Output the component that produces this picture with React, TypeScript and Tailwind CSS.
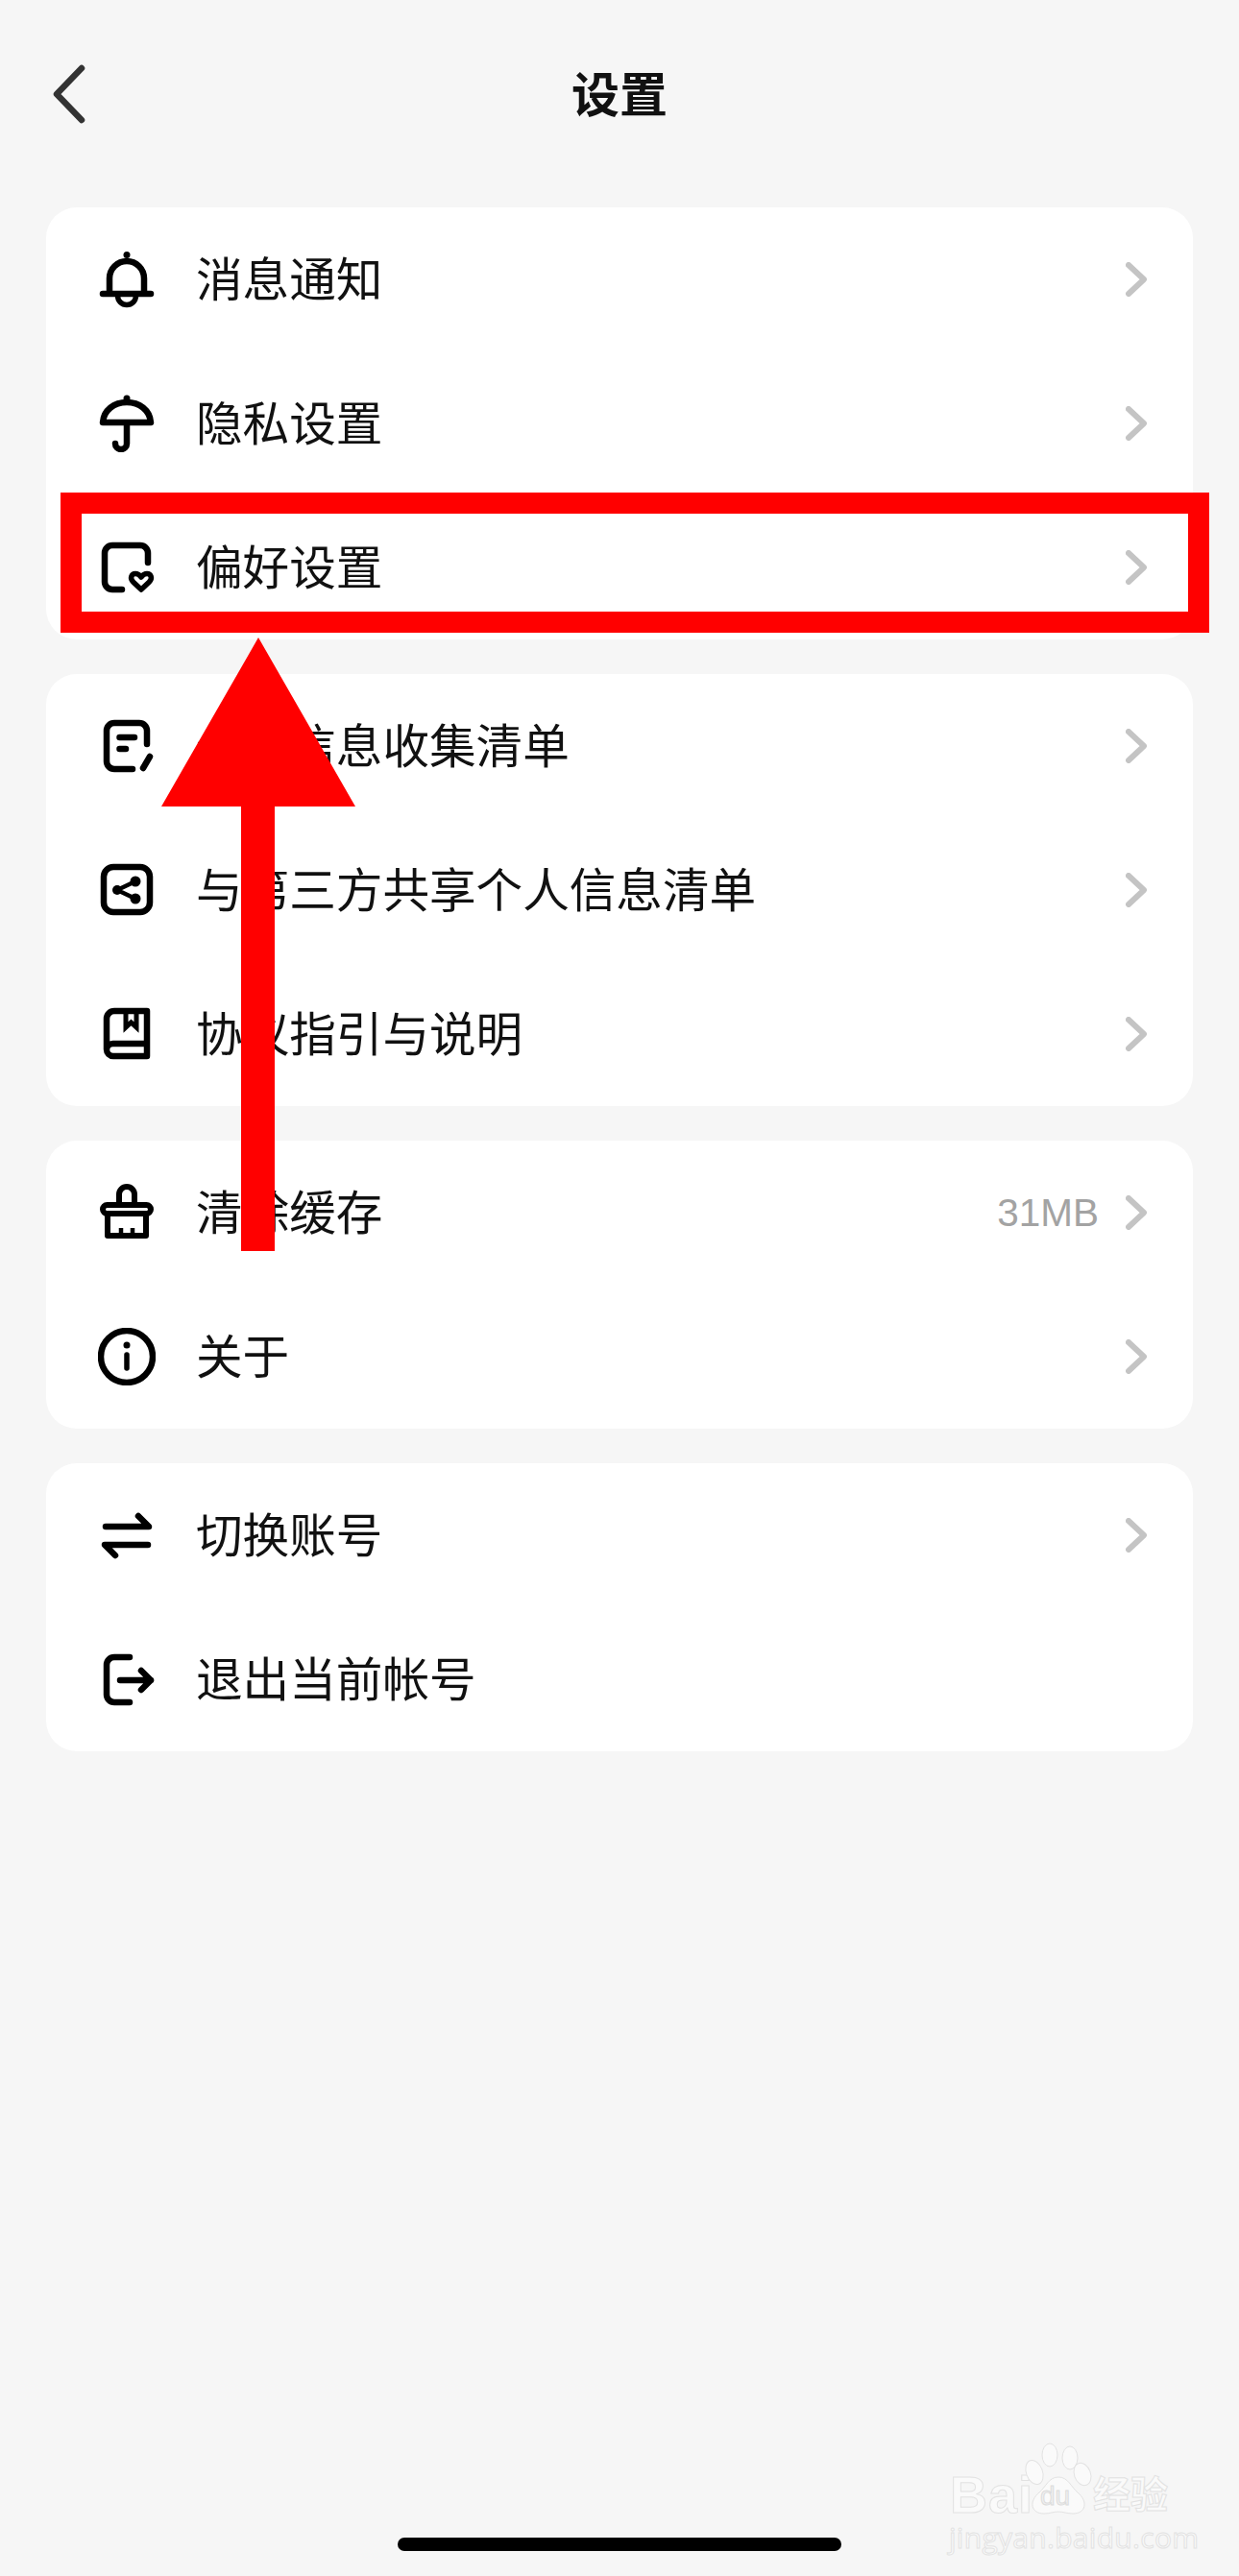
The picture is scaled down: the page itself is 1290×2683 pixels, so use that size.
import React from "react";

const cjk = "font-['Noto_Sans_CJK_SC','Noto_Sans',sans-serif]";

const S = ({ children }: { children: React.ReactNode }) => (
  <svg width="60" height="60" viewBox="0 0 60 60" fill="none" stroke="#000" strokeWidth="6.5" strokeLinecap="round" strokeLinejoin="round" className="shrink-0">
    {children}
  </svg>
);

const Bell = () => (
  <S>
    <circle cx="30" cy="4.5" r="3.5" fill="#000" stroke="none" />
    <path d="M12 43V29A18 18 0 0 1 48 29V43" />
    <path d="M5 45H55" />
    <path d="M20.5 47A9.5 9.5 0 0 0 39.5 47" strokeWidth="5.5" />
  </S>
);
const Umbrella = () => (
  <S>
    <circle cx="30" cy="4" r="3.5" fill="#000" stroke="none" />
    <path d="M5 29C6 16 17 8 30 8S54 16 55 29Z" />
    <path d="M30 30V51A6 6 0 0 1 18 51" />
  </S>
);
const HeartBox = () => (
  <S>
    <path d="M52 25V15A8 8 0 0 0 44 7H15A8 8 0 0 0 7 15V45A8 8 0 0 0 15 53H25" />
    <path d="M45 53L37 45.5C32.5 41 35 36.5 39 36.5C41.5 36.5 43.5 38 45 40C46.5 38 48.5 36.5 51 36.5C55 36.5 57.5 41 53 45.5Z" strokeWidth="5.5" />
  </S>
);
const DocEdit = () => (
  <S>
    <path d="M51 28V14A8 8 0 0 0 43 6H17A8 8 0 0 0 9 14V46A8 8 0 0 0 17 54H36" />
    <path d="M22.5 21H38M22.5 33H29" />
    <path d="M54 41L47 53" />
  </S>
);
const Share = () => (
  <S>
    <rect x="6" y="6" width="48" height="47" rx="10" />
    <path d="M20 30L39 21M20 30L39 39" strokeWidth="4.5" />
    <circle cx="20" cy="30" r="5" fill="#000" stroke="none" />
    <circle cx="39" cy="21" r="5.5" fill="#000" stroke="none" />
    <circle cx="39" cy="39" r="5.5" fill="#000" stroke="none" />
  </S>
);
const Book = () => (
  <S>
    <path d="M9 46V14A8 8 0 0 1 17 6H51V53H16A7 7 0 0 1 9 46A6.5 6.5 0 0 1 15.5 40H51" strokeLinecap="butt" strokeLinejoin="round" />
    <path d="M29 7V23L34.5 18L40 23V7" strokeWidth="5" strokeLinecap="butt" strokeLinejoin="miter" />
  </S>
);
const Brush = () => (
  <S>
    <path d="M22 21V11A8 8 0 0 1 38 11V21" strokeWidth="6" />
    <rect x="5" y="22" width="50" height="9" rx="4.5" strokeWidth="6" />
    <path d="M10 32V54H50V32" strokeWidth="6" />
    <path d="M24 54V46M36 54V46" strokeWidth="4.5" strokeLinecap="butt" />
  </S>
);
const Info = () => (
  <S>
    <circle cx="30" cy="30" r="27" />
    <circle cx="30" cy="18" r="3.5" fill="#000" stroke="none" />
    <path d="M30 28V42" strokeWidth="5.5" />
  </S>
);
const Swap = () => (
  <S>
    <path d="M8 21H53L42 10" />
    <path d="M52 40H7L18 51" />
  </S>
);
const Logout = () => (
  <S>
    <path d="M33 7H17A8 8 0 0 0 9 15V46A8 8 0 0 0 17 54H33" />
    <path d="M23 31H55M45 21L55 31L45 41" />
  </S>
);

const Chevron = () => (
  <svg width="22" height="36" viewBox="0 0 22 36" fill="none" stroke="#c4c4c4" strokeWidth="6" strokeLinecap="round" strokeLinejoin="round" className="shrink-0">
    <path d="M3 3L19 18L3 33" />
  </svg>
);

type RowData = { icon: React.ReactNode; label: string; value?: string; noArrow?: boolean };

const Row = ({ icon, label, value, noArrow }: RowData) => (
  <div className="flex h-[150px] items-center pl-[54px] pr-[48px]">
    {icon}
    <span className={`mb-[6px] ml-[42px] flex-1 text-[48.6px] leading-none text-[#111] ${cjk}`}>{label}</span>
    {value && <span className="mr-[28px] font-['Liberation_Sans',sans-serif] text-[40.5px] leading-none text-[#a3a3a3]">{value}</span>}
    {!noArrow && <Chevron />}
  </div>
);

const Card = ({ rows }: { rows: RowData[] }) => (
  <div className="rounded-[32px] bg-white">
    {rows.map((r) => (
      <Row key={r.label} {...r} />
    ))}
  </div>
);

export default function App() {
  return (
    <div className="relative h-[2683px] w-[1290px] overflow-hidden bg-[#f6f6f6]">
      <header className="grid h-[196px] grid-cols-[1fr_auto_1fr] items-center">
        <svg className="ml-[54px]" width="36" height="62" viewBox="0 0 36 62" fill="none" stroke="#333" strokeWidth="6.5" strokeLinecap="round" strokeLinejoin="round">
          <path d="M31 4L5 31L31 58" />
        </svg>
        <h1 className={`mb-[6px] text-[50px] font-semibold leading-none text-[#111] ${cjk}`}>设置</h1>
        <div />
      </header>

      <main className="mx-[48px] mt-[20px] flex flex-col gap-9">
        <Card
          rows={[
            { icon: <Bell />, label: "消息通知" },
            { icon: <Umbrella />, label: "隐私设置" },
            { icon: <HeartBox />, label: "偏好设置" },
          ]}
        />
        <Card
          rows={[
            { icon: <DocEdit />, label: "个人信息收集清单" },
            { icon: <Share />, label: "与第三方共享个人信息清单" },
            { icon: <Book />, label: "协议指引与说明" },
          ]}
        />
        <Card
          rows={[
            { icon: <Brush />, label: "清除缓存", value: "31MB" },
            { icon: <Info />, label: "关于" },
          ]}
        />
        <Card
          rows={[
            { icon: <Swap />, label: "切换账号" },
            { icon: <Logout />, label: "退出当前帐号", noArrow: true },
          ]}
        />
      </main>

      {/* annotation: red frame */}
      <div className="absolute left-[63px] top-[513px] h-[146px] w-[1196px] border-[22px] border-[#ff0000]" />

      {/* annotation: red arrow */}
      <svg className="absolute left-[168px] top-[664px]" width="202" height="639" viewBox="0 0 202 639">
        <path d="M101 0L202 176H118V639H83V176H0Z" fill="#ff0000" />
      </svg>

      {/* home indicator */}
      <div className="absolute bottom-[26px] left-[414px] h-[14px] w-[462px] rounded-full bg-black" />

      {/* watermark */}
      <div className="absolute left-[985px] top-[2540px] h-[125px] w-[240px]">
        <span className="absolute left-[4px] top-[34px] font-['Liberation_Sans',sans-serif] text-[54px] font-bold leading-[48px] tracking-[1px] text-[#fafafa] [-webkit-text-stroke:1px_#e2e2e2]">Bai</span>
        <svg className="absolute left-[80px] top-[0px]" width="80" height="85" viewBox="0 0 80 85">
          <g fill="#fafafa" stroke="#e2e2e2" strokeWidth="1">
            <ellipse cx="28" cy="17" rx="8" ry="12" />
            <ellipse cx="49" cy="20" rx="8" ry="12" />
            <ellipse cx="12" cy="35" rx="8.5" ry="13" transform="rotate(-20 12 35)" />
            <ellipse cx="62" cy="37" rx="8.5" ry="12" transform="rotate(-20 62 37)" />
            <path d="M37 40C47 40 50 50 57 56C68 65 66 78 52 78C46 78 42 76 37 76C32 76 28 78 22 78C8 78 6 65 17 56C24 50 27 40 37 40Z" />
          </g>
        </svg>
        <span className="absolute left-[98px] top-[46px] font-['Liberation_Sans',sans-serif] text-[28px] leading-none text-[#f0f0f0] [-webkit-text-stroke:1px_#dcdcdc]">du</span>
        <span className={`absolute left-[153px] top-[36px] text-[39px] font-bold leading-none text-[#fafafa] [-webkit-text-stroke:1px_#e2e2e2] ${cjk}`}>经验</span>
        <span className="absolute left-[3px] top-[88px] font-['Open_Sans',sans-serif] text-[30px] leading-none tracking-[0.3px] text-[#fafafa] [-webkit-text-stroke:1px_#e2e2e2]">jingyan.baidu.com</span>
      </div>
    </div>
  );
}
